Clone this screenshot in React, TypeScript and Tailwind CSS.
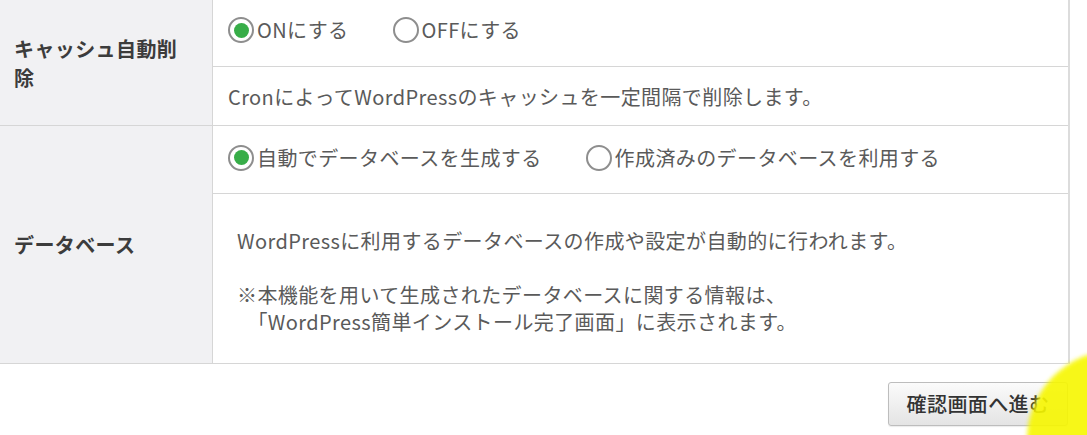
import React from 'react';

const font = "font-['Noto_Sans_CJK_JP','Noto_Sans',sans-serif]";

const Radio = ({ checked, label }: { checked?: boolean; label: string }) => (
  <label className="flex items-center gap-[3px]">
    <span className="flex h-[26px] w-[26px] items-center justify-center rounded-full border-2 border-[#8e8e8e] bg-white">
      {checked && <span className="h-[15px] w-[15px] rounded-full bg-[#37ad48]" />}
    </span>
    <span>{label}</span>
  </label>
);

const App = () => {
  return (
    <div className={`relative h-[435px] w-[1087px] overflow-hidden bg-white text-[20px] tracking-[0.4px] text-[#5a5a5a] ${font}`}>
      <div className="w-[1070px] border-r-2 border-[#dcdcdc]">
        {/* キャッシュ自動削除 */}
        <div className="flex h-[126px] border-b border-[#d6d6d6]">
          <div className="flex w-[213px] items-center border-r border-[#d6d6d6] bg-[#f1f1f3] pl-[14px] pr-[24px] text-[20px] font-bold leading-[29px] text-[#3c3c3c]">
            キャッシュ自動削除
          </div>
          <div className="flex flex-1 flex-col">
            <div className="flex h-[67px] items-center gap-[44px] border-b border-[#d6d6d6] pb-[6px] pl-[15px]">
              <Radio checked label="ONにする" />
              <Radio label="OFFにする" />
            </div>
            <div className="flex flex-1 items-center pl-[15px] pt-[2px]">
              CronによってWordPressのキャッシュを一定間隔で削除します。
            </div>
          </div>
        </div>

        {/* データベース */}
        <div className="flex h-[238px] border-b border-[#d6d6d6]">
          <div className="flex w-[213px] items-center border-r border-[#d6d6d6] bg-[#f1f1f3] pl-[14px] pr-[24px] text-[20px] font-bold leading-[29px] text-[#3c3c3c]">
            データベース
          </div>
          <div className="flex flex-1 flex-col">
            <div className="flex h-[68px] items-center gap-[44px] border-b border-[#d6d6d6] pb-[4px] pl-[15px]">
              <Radio checked label="自動でデータベースを生成する" />
              <Radio label="作成済みのデータベースを利用する" />
            </div>
            <div className="flex flex-1 flex-col justify-center pl-[24px] pt-[5px] leading-[27px]">
              <p>WordPressに利用するデータベースの作成や設定が自動的に行われます。</p>
              <p className="mt-[27px]">※本機能を用いて生成されたデータベースに関する情報は、</p>
              <p>　「WordPress簡単インストール完了画面」に表示されます。</p>
            </div>
          </div>
        </div>
      </div>

      <div className="flex w-[1070px] justify-end pr-[2px] pt-[18px]">
        <button className="h-[44px] w-[180px] rounded-[3px] border border-[#bdbdbd] bg-gradient-to-b from-[#fbfbfb] to-[#e4e4e4] text-[20px] font-medium text-[#333] shadow-[0_1px_1px_rgba(0,0,0,0.08)]">
          確認画面へ進む
        </button>
      </div>

      {/* cursor highlight */}
      <div className="pointer-events-none absolute left-[1027px] top-[350px] h-[180px] w-[180px] rounded-full bg-[#f7f700] opacity-90 blur-[2px]" />
    </div>
  );
};

export default App;
